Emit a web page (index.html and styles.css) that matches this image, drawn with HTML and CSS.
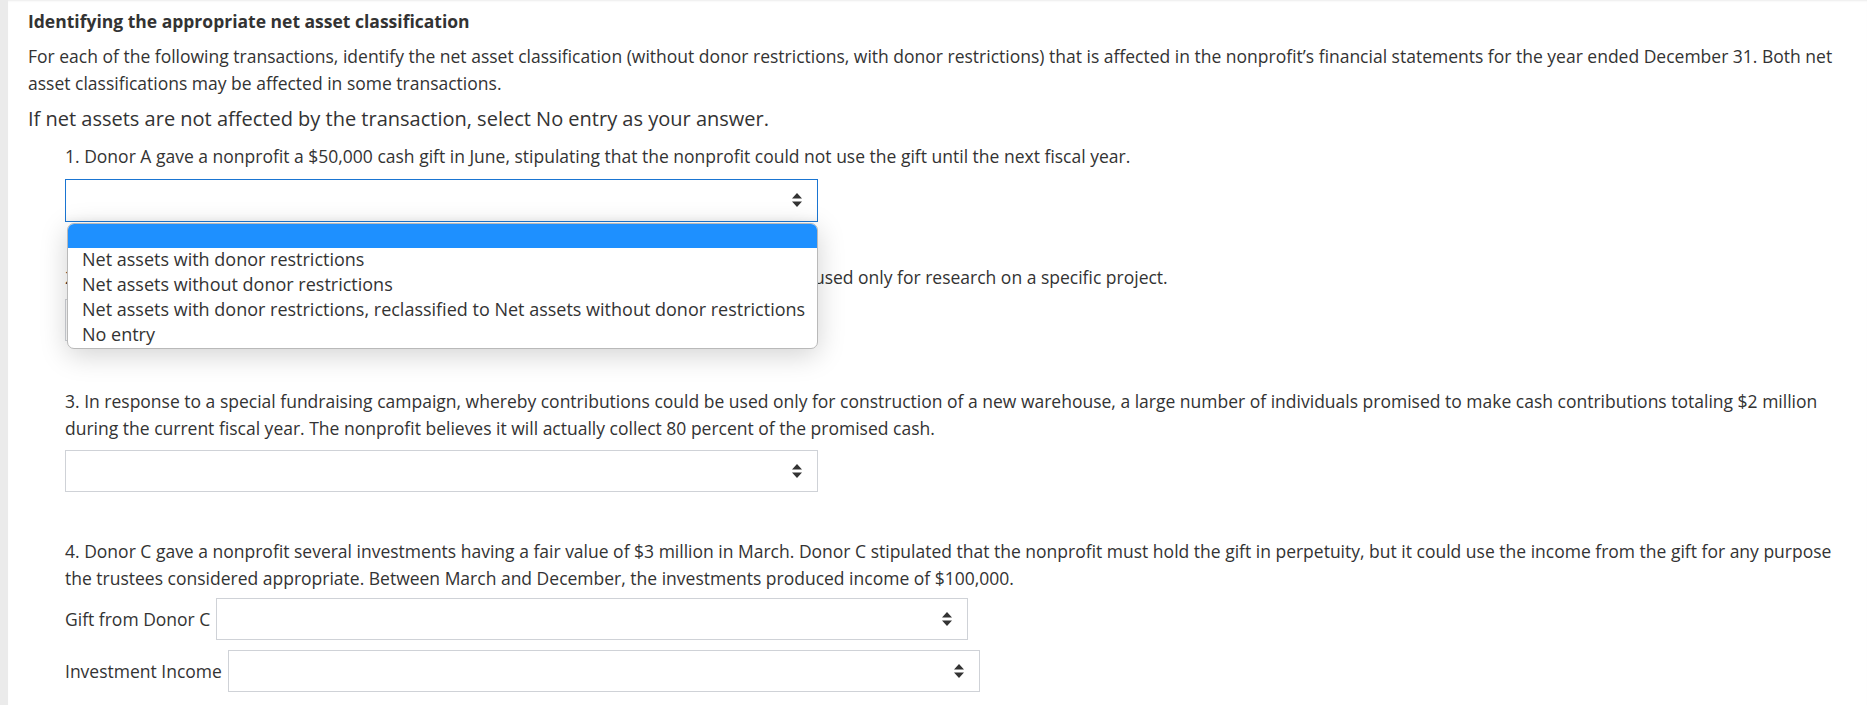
FILE: index.html
```html
<!DOCTYPE html>
<html lang="en">
<head>
<meta charset="utf-8">
<title>Identifying the appropriate net asset classification</title>
<link rel="stylesheet" href="styles.css">
</head>
<body>
<div class="page">
  <div class="strip"></div>
  <main class="content">
    <h1 class="title">Identifying the appropriate net asset classification</h1>
    <p class="intro">For each of the following transactions, identify the net asset classification (without donor restrictions, with donor restrictions) that is affected in the nonprofit’s financial statements for the year ended December 31. Both net asset classifications may be affected in some transactions.</p>
    <p class="note">If net assets are not affected by the transaction, select No entry as your answer.</p>

    <section class="question q1">
      <p class="qtext">1. Donor A gave a nonprofit a $50,000 cash gift in June, stipulating that the nonprofit could not use the gift until the next fiscal year.</p>
      <div class="select-wrap">
        <div class="select focused">
          <svg class="sort" viewBox="0 0 10 14" width="10" height="14"><path d="M5 0 L10 5.5 H0 Z M0 8.5 H10 L5 14 Z"/></svg>
        </div>
        <ul class="dropdown">
          <li class="opt active"></li>
          <li class="opt">Net assets with donor restrictions</li>
          <li class="opt">Net assets without donor restrictions</li>
          <li class="opt">Net assets with donor restrictions, reclassified to Net assets without donor restrictions</li>
          <li class="opt">No entry</li>
        </ul>
      </div>
    </section>

    <section class="question q2">
      <p class="qtext">2. Donor B gave a nonprofit a $10,000,000 cash gift in November, stipulating that the gift be used only for research on a specific project.</p>
      <div class="select">
        <svg class="sort" viewBox="0 0 10 14" width="10" height="14"><path d="M5 0 L10 5.5 H0 Z M0 8.5 H10 L5 14 Z"/></svg>
      </div>
    </section>

    <section class="question">
      <p class="qtext">3. In response to a special fundraising campaign, whereby contributions could be used only for construction of a new warehouse, a large number of individuals promised to make cash contributions totaling $2 million during the current fiscal year. The nonprofit believes it will actually collect 80 percent of the promised cash.</p>
      <div class="select">
        <svg class="sort" viewBox="0 0 10 14" width="10" height="14"><path d="M5 0 L10 5.5 H0 Z M0 8.5 H10 L5 14 Z"/></svg>
      </div>
    </section>

    <section class="question">
      <p class="qtext">4. Donor C gave a nonprofit several investments having a fair value of $3 million in March. Donor C stipulated that the nonprofit must hold the gift in perpetuity, but it could use the income from the gift for any purpose the trustees considered appropriate. Between March and December, the investments produced income of $100,000.</p>
      <div class="row">
        <span class="label">Gift from Donor C</span>
        <div class="select">
          <svg class="sort" viewBox="0 0 10 14" width="10" height="14"><path d="M5 0 L10 5.5 H0 Z M0 8.5 H10 L5 14 Z"/></svg>
        </div>
      </div>
      <div class="row">
        <span class="label">Investment Income</span>
        <div class="select">
          <svg class="sort" viewBox="0 0 10 14" width="10" height="14"><path d="M5 0 L10 5.5 H0 Z M0 8.5 H10 L5 14 Z"/></svg>
        </div>
      </div>
    </section>
  </main>
</div>
</body>
</html>
```
FILE: styles.css
```css
html, body {
  margin: 0;
  padding: 0;
  background: #ffffff;
}
body {
  font-family: "Open Sans", "DejaVu Sans", sans-serif;
  color: #333333;
  font-size: 17.5px;
  overflow: hidden;
}
.page {
  display: flex;
  min-height: 705px;
}
.strip {
  width: 8px;
  flex: none;
  background: #ebebeb;
}
.content {
  flex: 1;
  padding: 8px 22px 0 20px;
  box-shadow: inset 0 2px 2px -1px rgba(0, 0, 0, 0.08);
}
.title {
  margin: 0;
  font-size: 17.5px;
  font-weight: 700;
  line-height: 26px;
}
.intro {
  margin: 8.5px 0 0;
  line-height: 27px;
}
.note {
  margin: 8.5px 0 0;
  font-size: 20px;
  line-height: 28px;
}
.question {
  margin: 46px 0 0 37px;
}
.question.q1 {
  margin-top: 10px;
}
.question.q2 {
  margin-top: 42px;
}
.question.q2 + .question {
  margin-top: 47px;
}
.qtext {
  margin: 0;
  line-height: 26.5px;
}
.select-wrap {
  position: relative;
  margin-top: 9px;
  width: 753px;
}
.question > .select {
  margin-top: 9px;
}
.select {
  box-sizing: border-box;
  width: 753px;
  height: 42px;
  border: 1px solid #cfd2d7;
  background: #fff;
  display: flex;
  align-items: center;
  justify-content: flex-end;
  padding-right: 15px;
}
.select.focused {
  height: 43px;
  border-color: #1a75d2;
  box-shadow: inset 0 -6px 8px -6px rgba(0, 0, 0, 0.08);
}
.sort {
  fill: #333;
  display: block;
}
.dropdown {
  position: absolute;
  top: 44px;
  left: 2px;
  width: 751px;
  margin: 0;
  padding: 0;
  list-style: none;
  background: #fff;
  border: 1px solid #b9b9b9;
  border-radius: 7px;
  overflow: hidden;
  box-sizing: border-box;
  box-shadow: 0 6px 28px rgba(0, 0, 0, 0.18);
  z-index: 2;
  font-size: 18px;
}
.opt {
  height: 25px;
  line-height: 23px;
  padding-left: 14px;
  white-space: nowrap;
  color: #333;
}
.opt.active {
  height: 24px;
  background: #1e90ff;
}
.row {
  display: flex;
  align-items: center;
  gap: 6px;
  margin-top: 7px;
}
.row + .row {
  margin-top: 10px;
}
.label {
  white-space: nowrap;
  line-height: 26.5px;
}
.row .select {
  width: 752px;
}
```
